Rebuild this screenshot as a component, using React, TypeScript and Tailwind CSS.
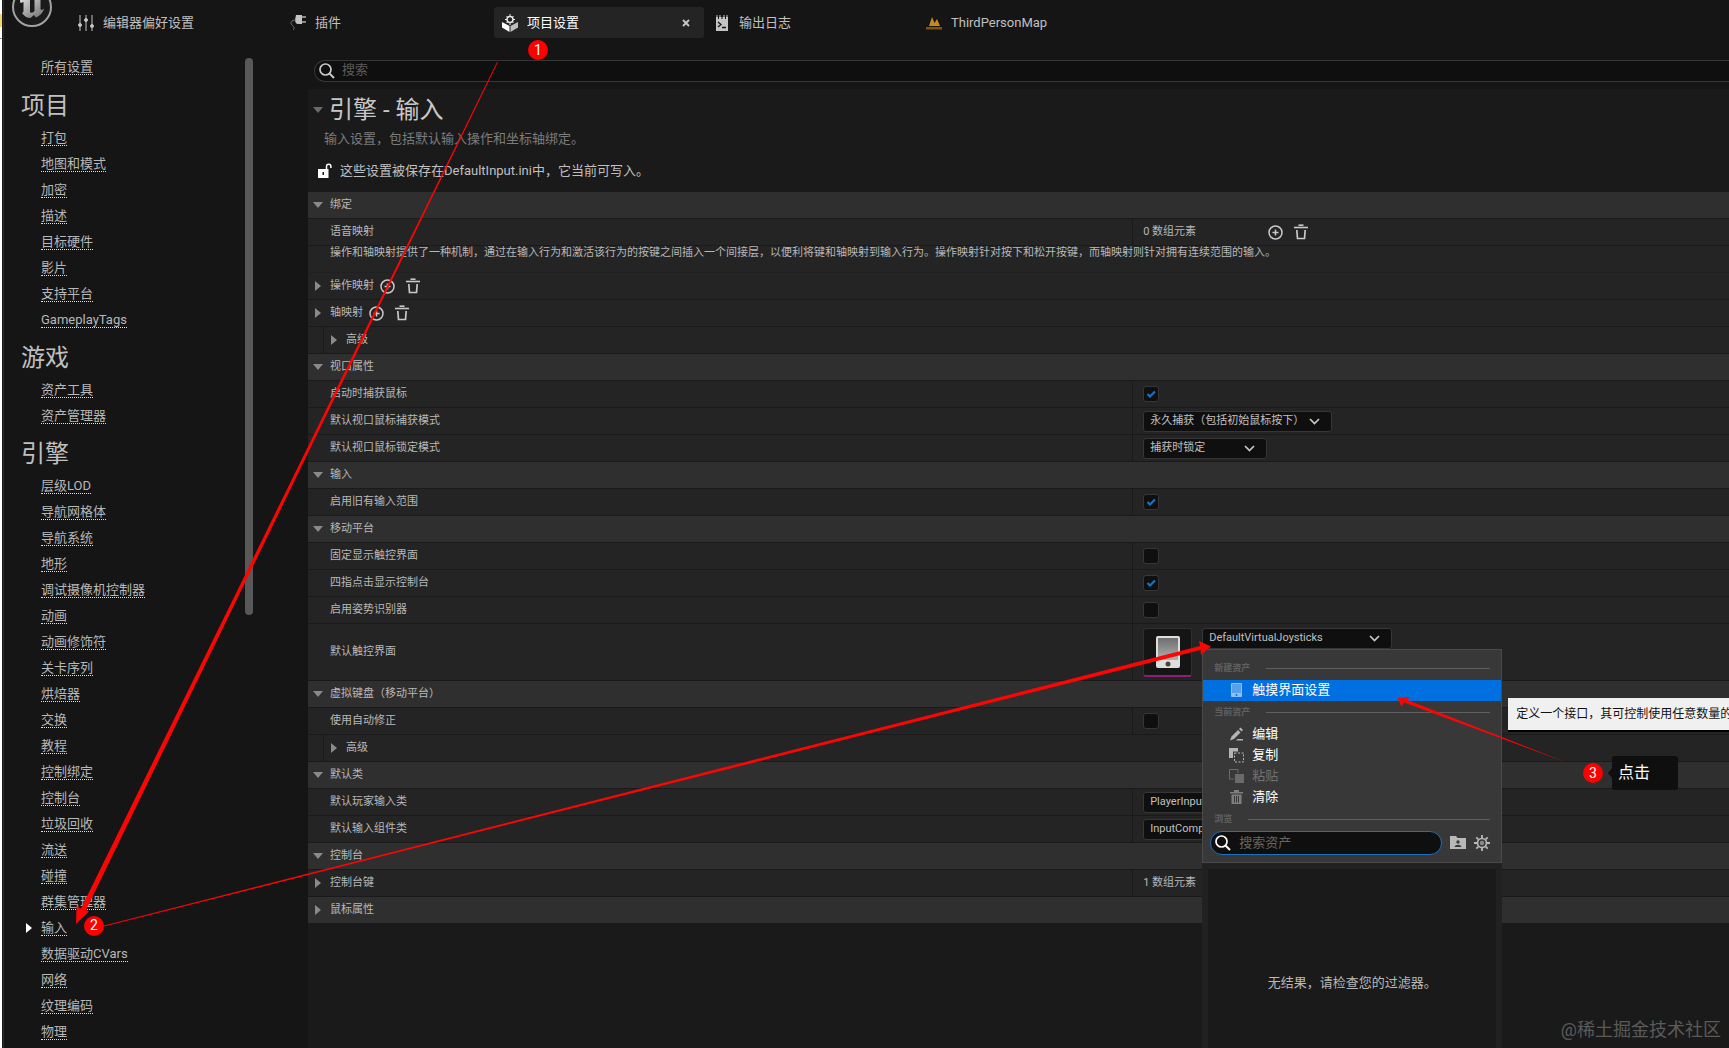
import { useState, type ReactNode } from "react";
import clsx from "clsx";

type NavGroup = { title: string; items: string[] };

const navGroups: NavGroup[] = [
  {
    title: "项目",
    items: ["打包", "地图和模式", "加密", "描述", "目标硬件", "影片", "支持平台", "GameplayTags"],
  },
  { title: "游戏", items: ["资产工具", "资产管理器"] },
  {
    title: "引擎",
    items: [
      "层级LOD",
      "导航网格体",
      "导航系统",
      "地形",
      "调试摄像机控制器",
      "动画",
      "动画修饰符",
      "关卡序列",
      "烘焙器",
      "交换",
      "教程",
      "控制绑定",
      "控制台",
      "垃圾回收",
      "流送",
      "碰撞",
      "群集管理器",
      "输入",
      "数据驱动CVars",
      "网络",
      "纹理编码",
      "物理",
    ],
  },
];

/* ---------- Iconos ---------- */

function EngineLogo() {
  return (
    <svg width="42" height="28" viewBox="0 0 42 28" className="shrink-0">
      <defs>
        <linearGradient id="logo" x1="0" y1="0" x2="1" y2="1">
          <stop offset="0" stopColor="#d8d8d8" />
          <stop offset="1" stopColor="#6e6e6e" />
        </linearGradient>
      </defs>
      <circle cx="21" cy="7" r="19" fill="#1b1b1b" stroke="#a2a2a2" strokeWidth="2" />
      <path
        d="M9 0c0 4 1 3 3.500 2v8.500c0 1.500-.5 2-1.500 2.500 2 3 5 5 8.500 5l3.500-3 2 2.500c4-1.500 7-5 8-9-1.500 1.500-3 2-3.500.5V0h-6v11c-1 1.500-3.500 2.500-4.500 1V0z"
        fill="url(#logo)"
      />
    </svg>
  );
}

function SlidersIcon() {
  return (
    <svg width="16" height="18" viewBox="0 0 16 18" stroke="#c4c4c4" fill="#c4c4c4">
      <path d="M2 1v16M8 1v16M14 1v16" />
      <circle cx="2" cy="11" r="1.500" />
      <circle cx="8" cy="6" r="1.500" />
      <circle cx="14" cy="12" r="1.500" />
    </svg>
  );
}

function PlugIcon() {
  return (
    <svg width="16" height="18" viewBox="0 0 16 18">
      <path d="M6 1h6v9H8C6 10 5 8 5 6z" fill="#c4c4c4" />
      <path d="M12 3h4M12 8h4" stroke="#8a8a8a" strokeWidth="2" />
      <path d="M6 6C1 6 0 9 2 11s3 3 1 5" stroke="#777" fill="none" />
    </svg>
  );
}

function ProjectIcon() {
  return (
    <svg width="16" height="18" viewBox="0 0 16 18">
      <path d="M0 8l7.500 4v6L0 13.500z" fill="#fff" />
      <path d="M16 8l-7.500 4v6l7.500-4.500z" fill="#bdbdbd" />
      <circle cx="8" cy="5.500" r="3" fill="none" stroke="#e8e8e8" strokeWidth="1.500" />
      <path
        d="M8 0v2M8 9v2M3 5.500h2M11 5.500h2M4.500 2l1.500 1.500M11.500 2L10 3.500M4.500 9L6 7.500M11.500 9L10 7.500"
        stroke="#e8e8e8"
      />
    </svg>
  );
}

function LogIcon() {
  return (
    <svg width="14" height="18" viewBox="0 0 14 18">
      <path d="M1 3h12v14H1z" fill="#c4c4c4" />
      <path d="M2 1v3M5 1v3M9 1v3M12 1v3" stroke="#c4c4c4" />
      <path d="M3.500 3v2M7 3v2M10.500 3v2" stroke="#151515" />
      <path d="M3 8l3 2.500L3 13M7 13.500h4" stroke="#151515" strokeWidth="1.300" fill="none" />
    </svg>
  );
}

function MapIcon() {
  return (
    <svg width="16" height="18" viewBox="0 0 16 18">
      <path d="M3 12L6 3l2.500 6L11 5l3 7z" fill="#c98a1b" />
      <path d="M0 13h16v2.500H0z" fill="#7d530d" />
    </svg>
  );
}

function SearchIcon({ color = "#c8c8c8" }: { color?: string }) {
  return (
    <svg width="16" height="16" viewBox="0 0 16 16" stroke={color} fill="none" className="shrink-0">
      <circle cx="6.500" cy="6.500" r="5.500" strokeWidth="1.700" />
      <path d="M10.500 10.500L15 15" strokeWidth="2" />
    </svg>
  );
}

function PlusIcon() {
  return (
    <svg width="15" height="15" viewBox="0 0 15 15" stroke="#c8c8c8" fill="none">
      <circle cx="7.500" cy="7.500" r="6.500" strokeWidth="1.500" />
      <path d="M7.500 4.500v6M4.500 7.500h6" strokeWidth="1.500" />
    </svg>
  );
}

function BinIcon() {
  return (
    <svg width="14" height="16" viewBox="0 0 14 16" stroke="#c8c8c8" fill="none">
      <path d="M0 3.500h14" strokeWidth="1.600" />
      <path d="M4.500 1.200h5" strokeWidth="1.600" />
      <path d="M2.800 6l.7 8.500h7l.7-8.500" strokeWidth="1.700" />
    </svg>
  );
}

function Chevron() {
  return (
    <svg
      width="11"
      height="7"
      viewBox="0 0 11 7"
      className="pointer-events-none absolute inset-y-0 right-3 my-auto"
    >
      <path d="M1 1l4.500 4.500L10 1" stroke="#c8c8c8" strokeWidth="1.700" fill="none" />
    </svg>
  );
}

function Triangle({ open = false, color = "#8a8a8a" }: { open?: boolean; color?: string }) {
  return (
    <svg width="10" height="10" viewBox="0 0 10 10" fill={color}>
      {open ? <path d="M0 2h10L5 8z" /> : <path d="M2 0l6 5-6 5z" />}
    </svg>
  );
}

/* ---------- Controles ---------- */

function Check({ id, checked = false }: { id: string; checked?: boolean }) {
  const [on, setOn] = useState(checked);
  return (
    <span className="grid size-4 place-items-center">
      <input
        id={id}
        type="checkbox"
        checked={on}
        onChange={() => setOn(!on)}
        className="col-start-1 row-start-1 size-4 appearance-none rounded-[3px] border border-[#363636] bg-[#0f0f0f]"
      />
      {on && (
        <svg width="10" height="8" viewBox="0 0 10 8" className="pointer-events-none col-start-1 row-start-1">
          <path d="M1.500 4l2.500 2.500L9 1.500" stroke="#1272cc" strokeWidth="2.200" fill="none" />
        </svg>
      )}
    </span>
  );
}

function Dropdown({ id, value, className }: { id: string; value: string; className: string }) {
  return (
    <span className={clsx("relative block h-[21px]", className)}>
      <select
        id={id}
        className="block h-full w-full appearance-none rounded-[3px] border border-[#363636] bg-[#0f0f0f] px-1.5 text-[11px] leading-4 text-[#c0c0c0]"
      >
        <option>{value}</option>
      </select>
      <Chevron />
    </span>
  );
}

function AddClear() {
  return (
    <span className="flex items-center gap-[11px]">
      <button aria-label="添加元素">
        <PlusIcon />
      </button>
      <button aria-label="清空">
        <BinIcon />
      </button>
    </span>
  );
}

/* ---------- Filas de propiedades ---------- */

function Section({ title, open = true }: { title: string; open?: boolean }) {
  return (
    <button className="flex h-[27px] w-full items-center gap-0.5 border-b border-[#1a1a1a] bg-[#2f2f2f] text-left">
      <span className="flex w-5 justify-center">
        <Triangle open={open} />
      </span>
      {title}
    </button>
  );
}

function Row({ label, id, children, tall }: { label: string; id?: string; children: ReactNode; tall?: boolean }) {
  return (
    <div className={clsx("flex border-b border-[#1a1a1a] bg-[#242424]", tall ? "h-[57px]" : "h-[27px]")}>
      <div className="flex w-[58%] items-center pl-[22px]">
        {id ? <label htmlFor={id}>{label}</label> : label}
      </div>
      <div className="flex w-[42%] items-center border-l border-[#1a1a1a] pl-2.5">{children}</div>
    </div>
  );
}

function Expandable({ label, children, value }: { label: string; children?: ReactNode; value?: string }) {
  return (
    <div className="flex h-[27px] border-b border-[#1a1a1a] bg-[#242424]">
      <div className="flex w-[58%] items-center gap-0.5">
        <button aria-label={`展开${label}`} className="flex w-5 justify-center">
          <Triangle />
        </button>
        <span className="mr-1">{label}</span>
        {children}
      </div>
      {value && <div className="flex w-[42%] items-center border-l border-[#1a1a1a] pl-2.5">{value}</div>}
    </div>
  );
}

function Advanced() {
  return (
    <div className="flex h-[27px] items-center border-b border-[#1a1a1a] bg-[#242424]">
      <span className="h-full w-4 border-r border-[#1a1a1a]" />
      <button className="flex items-center">
        <span className="flex w-[22px] justify-center pr-0.5">
          <Triangle />
        </span>
        高级
      </button>
    </div>
  );
}

/* ---------- Menú de activos ---------- */

function MenuTitle({ children }: { children: string }) {
  return (
    <div className="flex h-[23px] items-center gap-4 px-[11px] text-[9px] font-bold text-[#606060]">
      {children}
      <span className="h-px grow bg-[#606060]" />
    </div>
  );
}

function MenuItem({ icon, label, disabled }: { icon: ReactNode; label: string; disabled?: boolean }) {
  return (
    <button
      disabled={disabled}
      className={clsx(
        "flex h-[21px] w-full items-center gap-2 pl-[26px] text-[13px]",
        disabled ? "text-[#707070]" : "text-white"
      )}
    >
      <span className="flex w-[15px] justify-center">{icon}</span>
      {label}
    </button>
  );
}

function AssetMenu() {
  return (
    <div className="absolute top-full left-0 z-10 w-[300px]">
      <div className="border border-[#4a4a4a] bg-[#383838] pt-[7px] pb-[7px]">
        <MenuTitle>新建资产</MenuTitle>
        <div className="relative bg-[#0070e0]">
          <MenuItem
            label="触摸界面设置"
            icon={
              <svg width="11" height="14" viewBox="0 0 11 14">
                <rect width="11" height="14" rx="1" fill="#8fc0f5" />
                <rect x="1" y="1" width="9" height="9" fill="#5a9fe8" />
                <circle cx="5.500" cy="12" r="1" fill="#0070e0" />
              </svg>
            }
          />
          <div
            role="tooltip"
            className="absolute top-[18px] left-full ml-[7px] border-b-2 border-black bg-[#f0f0f0] px-2 py-1.5 text-xs leading-5 whitespace-nowrap text-[#111]"
          >
            定义一个接口，其可控制使用任意数量的
          </div>
        </div>
        <MenuTitle>当前资产</MenuTitle>
        <MenuItem
          label="编辑"
          icon={
            <svg width="14" height="14" viewBox="0 0 14 14" fill="#b4b4b4">
              <path d="M0 13.500l1.500-4L8 3l2.500 2.500L4 12z" />
              <path d="M9 2l1.500-1.500L13 3l-1.500 1.500z" />
              <path d="M7.500 12H13v1.500H6z" />
            </svg>
          }
        />
        <MenuItem
          label="复制"
          icon={
            <svg width="15" height="15" viewBox="0 0 15 15">
              <path d="M0 0h9v3.500H4V10H0z" fill="#b4b4b4" />
              <rect x="5.500" y="5" width="9" height="9" fill="none" stroke="#b4b4b4" strokeDasharray="2 1.500" />
            </svg>
          }
        />
        <MenuItem
          disabled
          label="粘贴"
          icon={
            <svg width="15" height="15" viewBox="0 0 15 15">
              <path d="M5 10H.5V.5H9V4" fill="none" stroke="#6a6a6a" />
              <rect x="6" y="5" width="9" height="9" fill="#6a6a6a" />
            </svg>
          }
        />
        <MenuItem
          label="清除"
          icon={
            <svg width="13" height="14" viewBox="0 0 13 14">
              <path d="M4 0h5v2h4v1.500H0V2h4zM1.500 4.500h10V14h-10z" fill="#7e7e7e" />
              <path d="M4.500 6v6.500M6.500 6v6.500M8.500 6v6.500" stroke="#383838" />
            </svg>
          }
        />
        <MenuTitle>浏览</MenuTitle>
        <div className="flex items-center gap-2 pr-[11px] pl-[7px]">
          <label className="flex h-6 grow items-center gap-2 rounded-full border border-[#1d6fc0] bg-[#0f0f0f] px-1">
            <SearchIcon color="#ffffff" />
            <input
              type="text"
              aria-label="搜索资产"
              placeholder="搜索资产"
              className="w-full min-w-0 bg-transparent text-[13px] leading-5 outline-none placeholder:text-[#6a6460]"
            />
          </label>
          <button aria-label="文件夹">
            <svg width="16" height="13" viewBox="0 0 16 13">
              <path d="M0 0h6l1.500 2H16v11H0z" fill="#b8b8b8" />
              <circle cx="8" cy="6" r="1.700" fill="#383838" />
              <path d="M4.500 11c.5-3 6.500-3 7 0z" fill="#383838" />
            </svg>
          </button>
          <button aria-label="设置">
            <svg width="16" height="16" viewBox="0 0 16 16" stroke="#b8b8b8" fill="none">
              <circle cx="8" cy="8" r="4.500" strokeWidth="1.700" />
              <circle cx="8" cy="8" r="2.200" fill="#8a8a8a" stroke="none" />
              <path
                d="M8 0v3M8 13v3M0 8h3M13 8h3M2.300 2.300l2 2M11.700 11.700l2 2M2.300 13.700l2-2M11.700 4.300l2-2"
                strokeWidth="1.800"
              />
            </svg>
          </button>
        </div>
      </div>
      <div className="bg-[#212121] p-1.5">
        <p className="flex h-[228px] items-center justify-center bg-[#1a1a1a] text-[13px] text-[#b8b8b8]">
          无结果，请检查您的过滤器。
        </p>
      </div>
    </div>
  );
}

/* ---------- Barra superior y lateral ---------- */

function Tab({ icon, label, active }: { icon: ReactNode; label: string; active?: boolean }) {
  return (
    <div
      className={clsx(
        "flex h-[31px] w-[210px] items-center rounded-[3px] px-2",
        active ? "bg-[#242424] text-white" : "text-[#c0c0c0]"
      )}
    >
      <button className="flex grow items-center gap-[9px] text-[13px]">
        <span className="flex w-4 justify-center">{icon}</span>
        {label}
      </button>
      {active && (
        <button aria-label="关闭" className="px-1.5">
          <svg width="8" height="8" viewBox="0 0 8 8" stroke="#c8c8c8" strokeWidth="1.800">
            <path d="M1 1l6 6M7 1L1 7" />
          </svg>
        </button>
      )}
    </div>
  );
}

function NavLink({ label, current }: { label: string; current?: boolean }) {
  return (
    <li className="flex h-[26px] items-center">
      <span className="flex w-9 justify-end pr-[7px]">{current && <Triangle color="#ffffff" />}</span>
      <a href="#" className="border-b border-dotted border-[#e0e0e0] text-[13px] leading-[14px] text-[#b8b8b8]">
        {label}
      </a>
    </li>
  );
}

function Sidebar() {
  return (
    <aside className="flex w-[303px] shrink-0 overflow-hidden">
      <nav className="w-60 shrink-0">
        <ul className="pt-px pb-px">
          <NavLink label="所有设置" />
        </ul>
        {navGroups.map((group) => (
          <section key={group.title}>
            <h2 className="flex h-11 items-center pt-1.5 pl-4 text-2xl leading-8 text-[#c0c0c0]">{group.title}</h2>
            <ul>
              {group.items.map((item) => (
                <NavLink key={item} label={item} current={item === "输入"} />
              ))}
            </ul>
          </section>
        ))}
      </nav>
      <div className="mt-[5px] h-[56%] w-2 rounded-full bg-[#585858]" />
    </aside>
  );
}

/* ---------- Anotaciones ---------- */

function Annotations() {
  return (
    <div className="pointer-events-none absolute inset-0 z-20 overflow-hidden">
      <svg className="h-full w-full" fill="#fb0505">
        <path d="M498 62L86 910l3 1.500L76 924l.5-17.500 4.500 2L497 62z" />
        <path d="M104 925.500L1200 646l-1-5 12 5.500-10 8.500-.5-5L104 926.500z" />
        <path d="M1569 763.500l-165-61-2.500 4-4-8.500 12-1-2 3z" />
        <path d="M1608 773l5-6v12z" fill="#0f0f0f" />
        <g fontSize="14" textAnchor="middle">
          <circle cx="538" cy="50" r="10" fill="#ff0000" />
          <text x="538" y="55" fill="#fff">
            1
          </text>
          <circle cx="94" cy="926" r="10" fill="#ff0000" />
          <text x="94" y="930" fill="#fff">
            2
          </text>
          <circle cx="1593" cy="773" r="10" fill="#ff0000" />
          <text x="1593" y="778" fill="#fff">
            3
          </text>
        </g>
      </svg>
      <div className="absolute top-[756px] left-[1612px] flex h-[34px] w-[66px] items-center rounded-[3px] bg-[#0f0f0f] pl-1.5 text-base text-white">
        点击
      </div>
      <div className="absolute right-2 bottom-1 text-lg leading-7 text-[#5a5a5a]">@稀土掘金技术社区</div>
    </div>
  );
}

export default function App() {
  return (
    <div className="relative flex h-screen overflow-hidden bg-[#151515] font-['Roboto','Noto_Sans_CJK_SC',sans-serif] text-[11px] leading-4 text-[#b8b8b8]">
      {/* borde de la ventana que queda detrás */}
      <div className="w-0.5 shrink-0 bg-white">
        <div className="mt-[14px] h-[13px] bg-[#f5d76b]" />
        <div className="mt-[11px] h-px bg-[#999]" />
      </div>
      <div className="mr-px w-0.5 shrink-0 border-r border-[#2c2c2c]" />

      <div className="flex min-w-0 grow flex-col">
        <header className="flex h-[53px] shrink-0 items-start">
          <div className="ml-1.5 w-[59px] shrink-0">
            <EngineLogo />
          </div>
          <div className="flex gap-0.5 pt-[7px]">
            <Tab icon={<SlidersIcon />} label="编辑器偏好设置" />
            <Tab icon={<PlugIcon />} label="插件" />
            <Tab icon={<ProjectIcon />} label="项目设置" active />
            <Tab icon={<LogIcon />} label="输出日志" />
            <Tab icon={<MapIcon />} label="ThirdPersonMap" />
          </div>
        </header>

        <div className="flex min-h-0 grow">
          <Sidebar />

          <main className="flex min-w-0 grow flex-col">
            <div className="py-[7px] pl-1.5">
              <label className="flex h-[22px] items-center gap-[7px] rounded-l-full border border-r-0 border-[#363636] bg-[#0f0f0f] pl-1">
                <SearchIcon />
                <input
                  type="text"
                  aria-label="搜索"
                  placeholder="搜索"
                  className="w-full bg-transparent pb-0.5 text-[13px] leading-5 outline-none placeholder:text-[#5c5c5c]"
                />
              </label>
            </div>

            <div className="grow bg-[#1a1a1a]">
              <h1 className="flex h-10 items-center gap-1.5 pt-0.5 pl-[5px] text-2xl text-[#c8c8c8]">
                <Triangle open color="#6a6a6a" />
                引擎 - 输入
              </h1>
              <p className="pl-4 text-[13px] leading-5 text-[#7c7c7c]">输入设置，包括默认输入操作和坐标轴绑定。</p>
              <p className="flex h-[43px] items-center gap-2 pl-2.5 text-[13px] text-[#c0c0c0]">
                <svg width="14" height="15" viewBox="0 0 14 15">
                  <path d="M0 6h10.500v9H0z" fill="#fff" />
                  <path d="M8.500 6V3.500a2.200 2.200 0 014.400 0V5" stroke="#fff" strokeWidth="1.500" fill="none" />
                  <path d="M4.500 9h1.500v3H4.500z" fill="#1a1a1a" />
                </svg>
                这些设置被保存在DefaultInput.ini中，它当前可写入。
              </p>

              <Section title="绑定" />
              <Row label="语音映射">
                <span className="mr-[17px] w-[108px]">0 数组元素</span>
                <AddClear />
              </Row>
              <p className="h-[27px] truncate border-b border-[#202020] bg-[#242424] pl-[22px] leading-[14px]">
                操作和轴映射提供了一种机制，通过在输入行为和激活该行为的按键之间插入一个间接层，以便利将键和轴映射到输入行为。操作映射针对按下和松开按键，而轴映射则针对拥有连续范围的输入。
              </p>
              <Expandable label="操作映射">
                <AddClear />
              </Expandable>
              <Expandable label="轴映射">
                <AddClear />
              </Expandable>
              <Advanced />

              <Section title="视口属性" />
              <Row label="启动时捕获鼠标" id="capture">
                <Check id="capture" checked />
              </Row>
              <Row label="默认视口鼠标捕获模式" id="captureMode">
                <Dropdown id="captureMode" value="永久捕获（包括初始鼠标按下）" className="w-[189px]" />
              </Row>
              <Row label="默认视口鼠标锁定模式" id="lockMode">
                <Dropdown id="lockMode" value="捕获时锁定" className="w-[124px]" />
              </Row>

              <Section title="输入" />
              <Row label="启用旧有输入范围" id="legacy">
                <Check id="legacy" checked />
              </Row>

              <Section title="移动平台" />
              <Row label="固定显示触控界面" id="touch">
                <Check id="touch" />
              </Row>
              <Row label="四指点击显示控制台" id="fourFinger">
                <Check id="fourFinger" checked />
              </Row>
              <Row label="启用姿势识别器" id="gesture">
                <Check id="gesture" />
              </Row>
              <Row label="默认触控界面" id="joystick" tall>
                <div className="flex gap-2.5">
                  <div className="flex size-[49px] items-center justify-center rounded-[3px] border border-b-2 border-[#303030] border-b-[#8d1f78] bg-[#151515]">
                    <svg width="24" height="32" viewBox="0 0 24 32">
                      <defs>
                        <linearGradient id="screen" x1="0" y1="0" x2="0" y2="1">
                          <stop offset="0" stopColor="#6e6e6e" />
                          <stop offset="1" stopColor="#b0b0b0" />
                        </linearGradient>
                      </defs>
                      <rect width="24" height="32" rx="2" fill="#dedede" />
                      <rect x="2" y="2" width="20" height="22" fill="url(#screen)" />
                      <circle cx="12" cy="28" r="2.500" fill="#444" />
                    </svg>
                  </div>
                  <div className="relative h-[21px]">
                    <Dropdown id="joystick" value="DefaultVirtualJoysticks" className="w-[190px]" />
                    <AssetMenu />
                  </div>
                </div>
              </Row>

              <Section title="虚拟键盘（移动平台）" />
              <Row label="使用自动修正" id="autocorrect">
                <Check id="autocorrect" />
              </Row>
              <Advanced />

              <Section title="默认类" />
              <Row label="默认玩家输入类" id="playerInput">
                <Dropdown id="playerInput" value="PlayerInput" className="w-[190px]" />
              </Row>
              <Row label="默认输入组件类" id="inputComponent">
                <Dropdown id="inputComponent" value="InputComponent" className="w-[190px]" />
              </Row>

              <Section title="控制台" />
              <Expandable label="控制台键" value="1 数组元素" />
              <Section title="鼠标属性" open={false} />
            </div>
          </main>
        </div>
      </div>

      <Annotations />
    </div>
  );
}
